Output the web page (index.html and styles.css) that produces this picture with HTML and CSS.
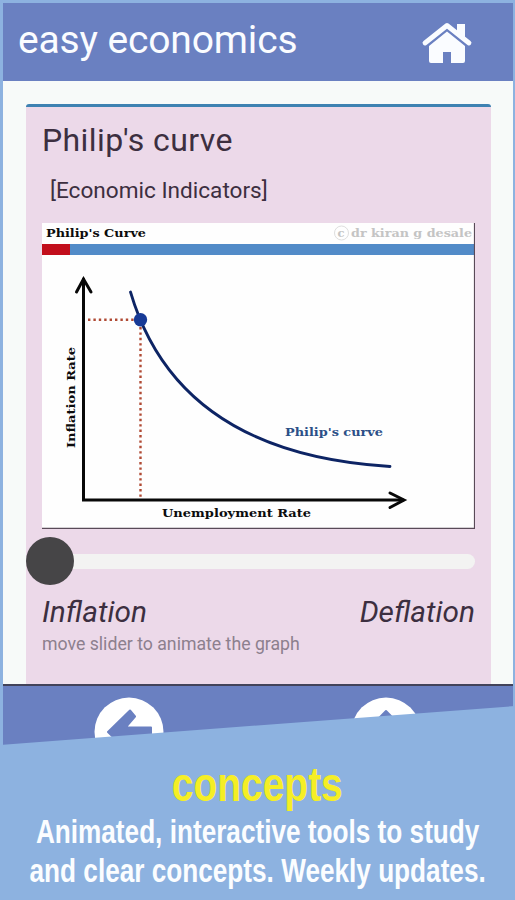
FILE: index.html
```html
<!DOCTYPE html>
<html lang="en">
<head>
  <meta charset="UTF-8">
  <meta name="viewport" content="width=device-width, initial-scale=1.0">
  <title>easy economics</title>
  <link rel="stylesheet" href="styles.css">
</head>
<body>
  <div class="screen">
    <header class="topbar">
      <h1>easy economics</h1>
      <svg class="home" viewBox="0 0 50 41" width="50" height="41">
        <path d="M3 22L25 4.500L47 22" fill="none" stroke="#fafcff" stroke-width="4.800" stroke-linecap="round" stroke-linejoin="round"/>
        <path d="M35 3h8v14l-8-7z" fill="#fafcff"/>
        <path d="M25 10.500L43 25v15a2 2 0 0 1-2 2H29V31h-8v11H9a2 2 0 0 1-2-2V25z" fill="#fafcff"/>
      </svg>
    </header>
    <main>
      <section class="card">
        <h2>Philip's curve</h2>
        <p class="topic">[Economic Indicators]</p>
        <svg class="chart" viewBox="42 223 433 306" width="433" height="306">
          <rect x="42" y="223" width="433" height="306" fill="#fefefe"/>
          <rect x="42" y="244" width="432" height="11" fill="#528bc8"/>
          <rect x="42" y="244" width="28" height="11" fill="#c20e1c"/>
          <path d="M474.500 223V528.300H42" fill="none" stroke="#594a58" stroke-width="1.200"/>
          <text x="46" y="237" textLength="100" lengthAdjust="spacingAndGlyphs">Philip's Curve</text>
          <circle cx="341.500" cy="233" r="7" fill="none" stroke="#dedede"/>
          <text class="credit" x="337.500" y="237">c</text>
          <text class="credit" x="351" y="237" textLength="121" lengthAdjust="spacingAndGlyphs">dr kiran g desale</text>
          <!-- axes -->
          <g fill="none" stroke="#080808" stroke-width="3" stroke-linecap="round" stroke-linejoin="miter">
            <path d="M83.500 279V500H403"/>
            <path d="M76.500 292L83.500 279L91 292"/>
            <path d="M390 493L404 500L390 507.500"/>
          </g>
          <g fill="none" stroke="#b04a34" stroke-width="2.400" stroke-dasharray="2.400 3">
            <path d="M88 319.700H134"/>
            <path d="M140.500 327V498"/>
          </g>
          <path d="M130.500 292C149 355 200 455 390 466.500" fill="none" stroke="#0d2464" stroke-width="2.800" stroke-linecap="round"/>
          <circle cx="140.500" cy="319.700" r="6.700" fill="#173a96"/>
          <text class="label" x="285" y="435.500" textLength="98" lengthAdjust="spacingAndGlyphs">Philip's curve</text>
          <text x="162" y="517.300" textLength="149" lengthAdjust="spacingAndGlyphs">Unemployment Rate</text>
          <text transform="translate(74.500 448) rotate(-90)" textLength="101" lengthAdjust="spacingAndGlyphs">Inflation Rate</text>
        </svg>
        <div class="slider">
          <div class="track"></div>
          <div class="handle"></div>
        </div>
        <div class="ends">
          <span>Inflation</span>
          <span>Deflation</span>
        </div>
        <p class="hint">move slider to animate the graph</p>
      </section>
    </main>
    <nav class="toolbar">
      <svg viewBox="0 0 70 70" width="70" height="70">
        <circle cx="35" cy="35" r="34.500" fill="#fff"/>
        <path id="arrow" d="M14 35L36 13.500L41 19.500L31.500 30.500H57V39.500H31.500L41 50.500L36 56.500Z" fill="#6a80c1" stroke="#6a80c1" stroke-width="2" stroke-linejoin="round"/>
      </svg>
      <svg viewBox="0 0 70 70" width="70" height="70">
        <circle cx="35" cy="35" r="34.500" fill="#fff"/>
        <use href="#arrow" transform="rotate(90 35 35)"/>
      </svg>
    </nav>
  </div>
  <footer class="caption">
    <h3>concepts</h3>
    <p>Animated, interactive tools to study</p>
    <p>and clear concepts. Weekly updates.</p>
  </footer>
</body>
</html>
```

FILE: styles.css
```css
* {
  box-sizing: border-box;
}

body {
  margin: 0;
  width: 515px;
  height: 900px;
  overflow: hidden;
  background: #8db2e0;
  font-family: Roboto, sans-serif;
  color: #3c2f40;
}

h1, h2, h3, p {
  margin: 0;
  font-weight: normal;
  white-space: nowrap;
}

.screen {
  height: 748px;
  padding: 3px 2px 0 3px;
  overflow: hidden;
}

.topbar {
  display: flex;
  justify-content: space-between;
  height: 78px;
  padding: 0 41px 0 15px;
  background: #6a80c1;
  color: #fafcff;
}

.topbar h1 {
  font-size: 39px;
  line-height: 74px;
  letter-spacing: -0.15px;
}

.home {
  margin-top: 18px;
  overflow: visible;
}

main {
  height: 603px;
  padding: 23px 22px 0 23px;
  background: #f7faf9;
}

.card {
  height: 580px;
  padding: 0 16px;
  border-top: 3px solid #3e82b2;
  border-radius: 3px 3px 0 0;
  background: #ecd9e9;
}

.card h2 {
  height: 66px;
  font-size: 32px;
  line-height: 66px;
  letter-spacing: 0.4px;
}

.topic {
  height: 50px;
  padding-left: 8px;
  font-size: 22.6px;
  line-height: 35px;
}

.chart {
  display: block;
}

.chart text {
  font-family: "DejaVu Serif", serif;
  font-size: 11.5px;
  font-weight: bold;
  fill: #0c0c0c;
}

.chart .credit {
  fill: #c4c4c4;
}

.chart .label {
  fill: #2c5088;
}

.slider {
  position: relative;
  height: 63px;
  padding-top: 25px;
}

.track {
  height: 15px;
  border-radius: 8px;
  background: #f3f3f2;
}

.handle {
  position: absolute;
  left: -16px;
  top: 8px;
  width: 48px;
  height: 48px;
  border-radius: 50%;
  background: #464547;
}

.ends {
  display: flex;
  justify-content: space-between;
  height: 41px;
  font-size: 29.8px;
  font-style: italic;
  line-height: 40px;
}

.hint {
  font-size: 17.7px;
  line-height: 22px;
  color: #8d808e;
}

.toolbar {
  display: flex;
  justify-content: space-between;
  height: 80px;
  padding: 11px 92px 0 91px;
  border-top: 2px solid #42435a;
  background: #6a80c1;
}

.caption {
  display: flex;
  flex-direction: column;
  align-items: center;
  position: relative;
  height: 195px;
  margin-top: -43px;
  padding-top: 54px;
  background: #8db2e0;
  clip-path: polygon(0 40px, 100% 1px, 100% 100%, 0 100%);
  font-family: "Liberation Sans", sans-serif;
  color: #fbfdff;
}

/* condensed lettering */
.caption h3,
.caption p {
  font-weight: bold;
  transform: scaleX(0.793);
}

.caption h3 {
  height: 53px;
  font-size: 47.5px;
  line-height: 52px;
  color: #f5ee25;
  transform: scaleX(0.82);
}

.caption p {
  font-size: 33px;
  line-height: 39px;
}
```
